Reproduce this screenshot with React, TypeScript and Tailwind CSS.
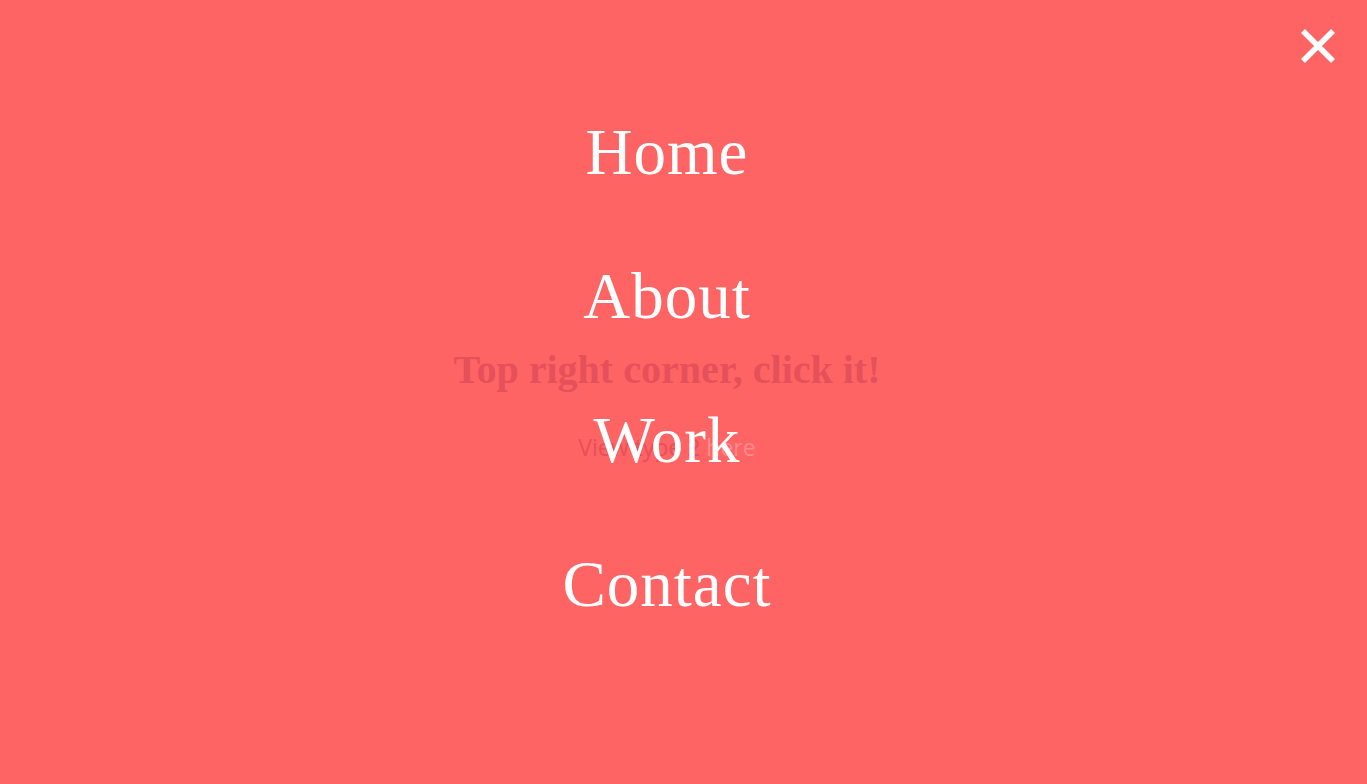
import React, { useState } from "react";

const links = ["Home", "About", "Work", "Contact"];

export default function App() {
  const [open, setOpen] = useState(true);

  return (
    <div className="relative h-[784px] w-full overflow-hidden bg-[#ff6464]">
      <div className="relative h-full w-[1334px]">
        {/* page content behind the overlay */}
        <div className="flex h-full flex-col items-center pt-[342px]">
          <h1 className="font-['Liberation_Serif',serif] text-[40px] font-bold leading-[56px] text-[#e5505a]">
            Top right corner, click it!
          </h1>
          <p className="mt-[33px] font-['Open_Sans',sans-serif] text-[23px] leading-[32px] text-[#e5505a]">
            View type 2 <span className="text-[#ff8a8f]">here</span>
          </p>
        </div>

        {open && (
          <nav className="absolute inset-0 flex flex-col items-center pt-[110px]">
            <ul className="flex flex-col items-center gap-[60px]">
              {links.map((l) => (
                <li key={l}>
                  <a
                    href="#"
                    className="block font-['Liberation_Serif',serif] text-[65px] leading-[84px] tracking-[1px] text-white"
                  >
                    {l}
                  </a>
                </li>
              ))}
            </ul>
          </nav>
        )}
      </div>

      <button
        onClick={() => setOpen(!open)}
        className="absolute right-[31px] top-[28px] flex h-[36px] w-[36px] items-center justify-center"
        aria-label="Close menu"
      >
        <svg viewBox="0 0 36 36" className="h-[36px] w-[36px]">
          <path d="M3 3 L33 33 M33 3 L3 33" stroke="white" strokeWidth="5.5" />
        </svg>
      </button>
    </div>
  );
}
